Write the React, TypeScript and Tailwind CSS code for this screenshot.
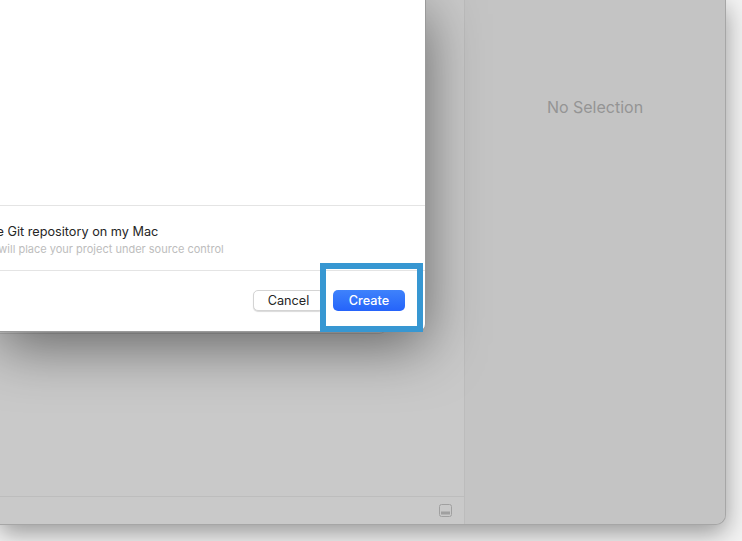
export default function App() {
  return (
    <div className="h-[541px] w-[742px] overflow-hidden bg-[#f3f3f3] font-['Inter',sans-serif]">
      <div className="relative flex h-[525px] w-[726px] rounded-br-[10px] border-r border-b border-[#a6a6a6] bg-[#c9c9c9] shadow-[0_8px_24px_rgba(0,0,0,0.38)]">
        <div className="flex w-[465px] flex-col border-r border-[#bcbcbc]">
          <div className="flex-1" />
          <div className="flex h-[28px] items-center justify-end border-t border-[#bdbdbd] pr-[12px]">
            <svg width="13" height="13" viewBox="0 0 13 13" fill="none">
              <rect x="0.5" y="0.5" width="12" height="12" rx="2" stroke="#a0a0a0" />
              <rect x="2" y="7.5" width="9" height="3" fill="#a0a0a0" />
            </svg>
          </div>
        </div>
        <div className="flex flex-1 justify-center rounded-br-[10px] bg-[#c4c4c4] pt-[97px]">
          <span className="text-[16px] leading-[20px] text-[#949494]">No Selection</span>
        </div>

        {/* sheet sitting over the window */}
        <div className="absolute top-0 left-0 h-[334px] w-[387px] rounded-br-[8px] border-b border-[#b4b4b4] bg-[#d0d0d0]" />
        <div className="absolute top-0 left-0 flex h-[332px] w-[426px] flex-col overflow-hidden rounded-br-[8px] border-r border-b border-[#9a9a9a] bg-white shadow-[0_14px_56px_rgba(0,0,0,0.5)]">
          <div className="h-[206px] border-b border-[#e4e4e4]" />
          <div className="h-[65px] border-b border-[#e4e4e4] pt-[18px]">
            <div className="-ml-[36px] text-[12.7px] leading-[16px] whitespace-nowrap text-[#262626]">
              Create Git repository on my Mac
            </div>
            <div className="-ml-[38px] pt-[2px] text-[11px] leading-[14px] whitespace-nowrap text-[#bdbdbd]">
              Xcode will place your project under source control
            </div>
          </div>
          <div className="flex flex-1 items-start justify-end gap-[9px] pt-[19px] pr-[20px]">
            <button className="h-[21px] w-[71px] rounded-[5px] border border-[#d4d4d4] bg-white text-[12.7px] leading-[19px] text-[#262626] shadow-[0_1px_1px_rgba(0,0,0,0.15)]">
              Cancel
            </button>
            <button className="h-[21px] w-[72px] rounded-[5px] bg-gradient-to-b from-[#3f82fb] to-[#2563fa] text-[12.7px] leading-[21px] font-medium text-white">
              Create
            </button>
          </div>
        </div>

        {/* highlight around the Create button */}
        <div className="absolute top-[263px] left-[320px] h-[69px] w-[103px] border-[6px] border-[#3797d2]" />
      </div>
    </div>
  );
}
